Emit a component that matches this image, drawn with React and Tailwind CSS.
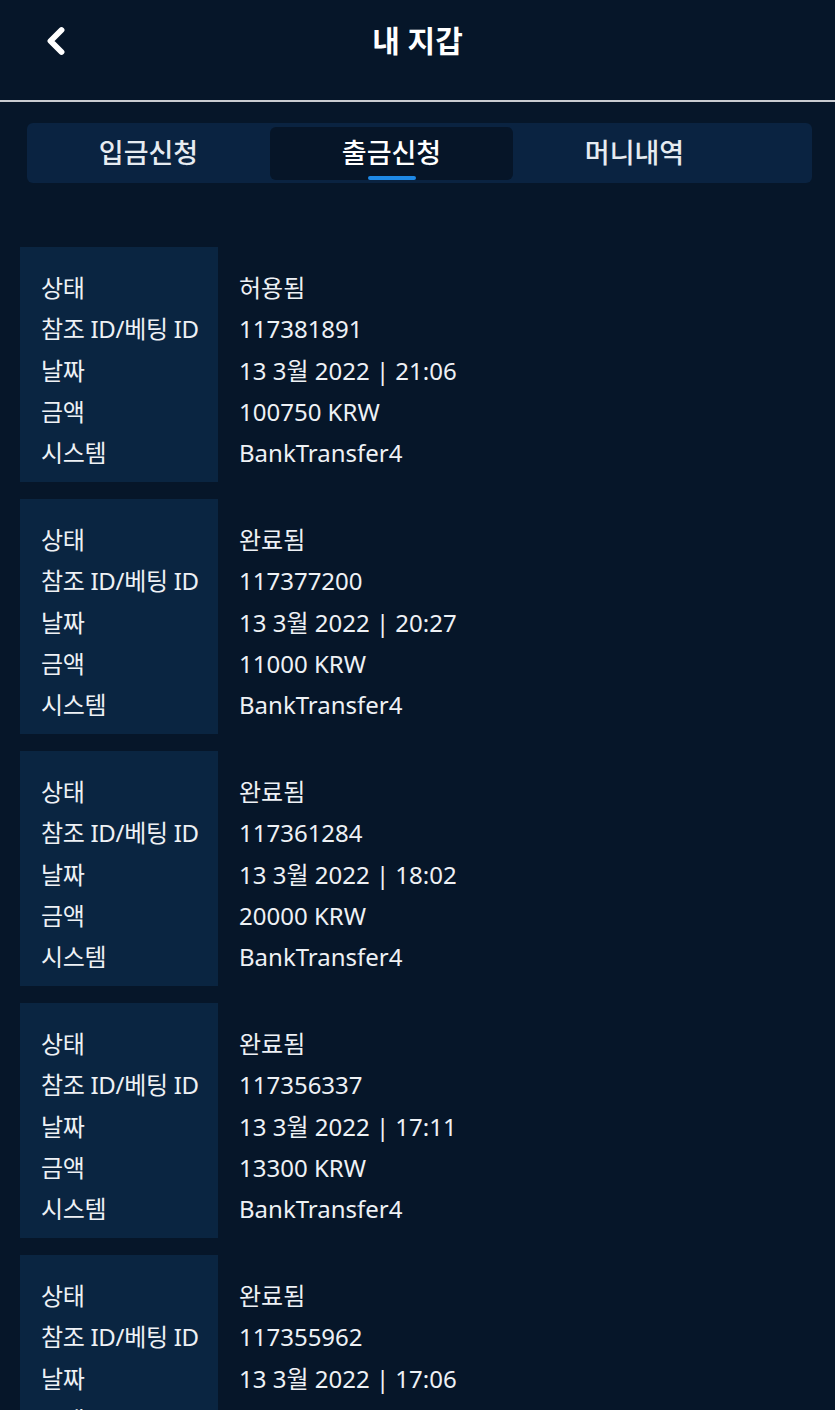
import { ChevronLeft } from 'lucide-react';

const tabs = ['입금신청', '출금신청', '머니내역'];

const records = [
  { status: '허용됨', id: '117381891', date: '13 3월 2022 | 21:06', amount: '100750 KRW', system: 'BankTransfer4' },
  { status: '완료됨', id: '117377200', date: '13 3월 2022 | 20:27', amount: '11000 KRW', system: 'BankTransfer4' },
  { status: '완료됨', id: '117361284', date: '13 3월 2022 | 18:02', amount: '20000 KRW', system: 'BankTransfer4' },
  { status: '완료됨', id: '117356337', date: '13 3월 2022 | 17:11', amount: '13300 KRW', system: 'BankTransfer4' },
  { status: '완료됨', id: '117355962', date: '13 3월 2022 | 17:06', amount: '20075 KRW', system: 'BankTransfer4' },
];

const labels = ['상태', '참조 ID/베팅 ID', '날짜', '금액', '시스템'];

function RecordCard({ record }) {
  const values = [record.status, record.id, record.date, record.amount, record.system];
  return (
    <div className="flex h-[235px] shrink-0">
      <div className="w-[198px] bg-[#0a2541] pl-[21px] pt-[20px]">
        {labels.map((l) => (
          <div key={l} className="h-[41.3px] leading-[41.3px] whitespace-nowrap tracking-[-0.3px]">{l}</div>
        ))}
      </div>
      <div className="flex-1 pl-[21px] pt-[20px]">
        {values.map((v, i) => (
          <div key={i} className="h-[41.3px] leading-[41.3px] whitespace-nowrap">{v}</div>
        ))}
      </div>
    </div>
  );
}

export default function App() {
  return (
    <div
      className="w-[835px] h-[1410px] overflow-hidden bg-[#061629] text-[#eef1f5]"
      style={{ fontFamily: '"Noto Sans", "Noto Sans CJK KR", sans-serif' }}
    >
      <div className="relative h-[100px] flex items-center justify-center pb-[20px]">
        <ChevronLeft className="absolute left-[34px] top-[19px] w-[44px] h-[44px] text-white" strokeWidth={3.2} />
        <h1 className="text-[30px] font-bold text-white">내 지갑</h1>
      </div>
      <div className="h-[2px] bg-[#c9ccd1]" />
      <div className="ml-[27px] mr-[23px] mt-[21px] h-[60px] rounded-[6px] bg-[#0a2341] flex items-center">
        {tabs.map((t, i) => (
          <div
            key={t}
            className={`relative w-[243px] h-[53px] flex items-center justify-center rounded-[6px] text-[27px] font-medium ${i === 1 ? 'bg-[#061528] text-white' : 'text-[#e6ebf1]'}`}
          >
            {t}
            {i === 1 && (
              <div className="absolute bottom-0 left-1/2 -translate-x-1/2 w-[48px] h-[4px] rounded-full bg-[#1e88e5]" />
            )}
          </div>
        ))}
      </div>
      <div className="mt-[64px] mx-[20px] flex flex-col gap-[17px] text-[24px]">
        {records.map((r) => (
          <RecordCard key={r.id} record={r} />
        ))}
      </div>
    </div>
  );
}
